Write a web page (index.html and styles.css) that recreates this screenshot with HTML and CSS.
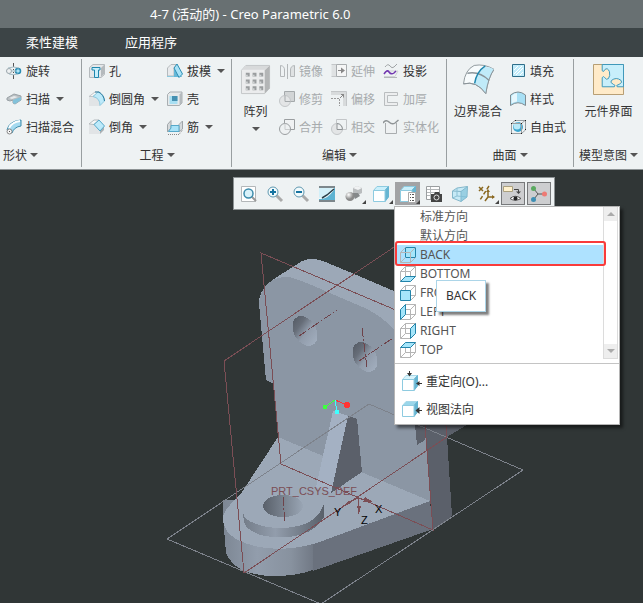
FILE: index.html
```html
<!DOCTYPE html>
<html lang="zh-CN">

<head>
    <meta charset="UTF-8">
    <title>4-7 (活动的) - Creo Parametric 6.0</title>
    <link rel="stylesheet" href="styles.css">
</head>

<body>
    <header class="titlebar">4-7 (活动的) - Creo Parametric 6.0</header>

    <nav class="tabs">
        <a href="#">柔性建模</a>
        <a href="#">应用程序</a>
    </nav>

    <div class="ribbon">
        <!-- 形状 -->
        <section class="group group-shape">
            <div class="commands">
                <div class="column">
                    <button class="cmd">
                        <svg class="icon" viewBox="0 0 16 16"><path d="M7.500 0v4M7.500 6v1M7.500 9v1M7.500 12v4" stroke="#555" fill="none"/><circle cx="3" cy="8" r="2.500" fill="#eef1f2" stroke="#9aa5aa"/><circle cx="12" cy="8" r="2.500" fill="#aee3f5" stroke="#2b8db3" stroke-width="1.500"/><path d="M2 5Q7.500 3 13 5M3 11Q7 12.500 12 11M5 8h5" fill="none" stroke="#a5bbc4"/></svg>
                        旋转
                    </button>
                    <button class="cmd">
                        <svg class="icon" viewBox="0 0 16 16"><path d="M1 7L8 3L15 5V9L9 13L7 12V9L4 10L1 9Z" fill="#b9bfc2" stroke="#9aa2a6"/><path d="M7 9L15 6V9L9 13L7 12Z" fill="#83c2da"/><path d="M3 7L8 5L12 6L6 8Z" fill="#e6eaec"/></svg>
                        扫描 <span class="caret"></span>
                    </button>
                    <button class="cmd">
                        <svg class="icon" viewBox="0 0 16 16"><path d="M1 11Q3 2 15 1V7Q8 8 6 14Z" fill="#a5daf0" stroke="#3b8bab"/><path d="M3 9Q6 3 14 2" stroke="#fff" stroke-width="2" fill="none"/><circle cx="3.500" cy="12.500" r="2.500" fill="#f5f5f5" stroke="#888"/><path d="M3 12h1v1H3z" fill="#555"/></svg>
                        扫描混合
                    </button>
                </div>
            </div>
            <button class="group-name">形状<span class="caret"></span></button>
        </section>

        <!-- 工程 -->
        <section class="group group-engineering">
            <div class="commands">
                <div class="column">
                    <button class="cmd">
                        <svg class="icon" viewBox="0 0 16 16"><path d="M.500 4.500L4 1.500H15.500V11.500L12 14.500H.500Z" fill="#e4e7e9" stroke="#b5babd"/><path d="M12 5v9l3-3V2Z" fill="#b5babd"/><path d="M3 4.500H11V7H9.500V14.500H5.500V7H3Z" fill="#c9effb" stroke="#1f87ae"/></svg>
                        孔
                    </button>
                    <button class="cmd">
                        <svg class="icon" viewBox="0 0 16 16"><path d="M0 6h6Q11 7 11 15H0Z" fill="#e1e4e6"/><path d="M0 5.500L6 1H10L4 5.500Z" fill="#f6f7f7" stroke="#c0c5c8"/><path d="M4 5.500L9 1Q15 4 15.500 10L11 14.500Q11 7 4 5.500Z" fill="#bdeafa" stroke="#8cc8de"/><path d="M6 1H10Q15 4 15.500 10" fill="none" stroke="#26799d"/></svg>
                        倒圆角 <span class="caret"></span>
                    </button>
                    <button class="cmd">
                        <svg class="icon" viewBox="0 0 16 16"><path d="M0 6h5l6 6v3H0Z" fill="#e1e4e6"/><path d="M0 5L5 1H10L5 5.500Z" fill="#f6f7f7" stroke="#b5babd"/><path d="M11 12v3l4-4V7" fill="#aab0b3"/><path d="M5 5.500L10 1L15.500 7L11 12Z" fill="#bdeafa" stroke="#55a8c9"/></svg>
                        倒角 <span class="caret"></span>
                    </button>
                </div>
                <div class="column">
                    <button class="cmd">
                        <svg class="icon" viewBox="0 0 16 16"><path d="M.500 5L4 1.500H10L7 5V13H.500Z" fill="#e8eaec" stroke="#b5babd"/><path d="M0 13.500h15" stroke="#8cc8de"/><path d="M7 5v9h5Z" fill="#66b8d8"/><path d="M7 5L10 1L15.500 11L12 14.500Z" fill="#a8e2f7" stroke="#2b8db3"/></svg>
                        拔模 <span class="caret"></span>
                    </button>
                    <button class="cmd">
                        <svg class="icon" viewBox="0 0 16 16"><path d="M.500 3.500L3 1H15V12L12.500 14.500H.500Z" fill="#e6e9ea" stroke="#a9afb2"/><path d="M12.500 3.500L15 1V12L12.500 14.500Z" fill="#b4babd"/><path d="M2.500 5h8v8h-8z" fill="#a8dff2"/><path d="M5 5h5.500v5H5z" fill="#4590b1"/></svg>
                        壳
                    </button>
                    <button class="cmd">
                        <svg class="icon" viewBox="0 0 16 16"><path d="M.500 5.500L4 1.500V9L.500 13ZM12 5.500L15.500 2V10L12 13Z" fill="#d5d9db" stroke="#a0a6a9"/><path d="M4 6.500H12V12.500H1.500L4 9Z" fill="#a8e2f7" stroke="#55a8c9"/><path d="M1 15.500H12L15.500 11" stroke="#888" stroke-dasharray="1 1" fill="none"/></svg>
                        筋 <span class="caret"></span>
                    </button>
                </div>
            </div>
            <button class="group-name">工程<span class="caret"></span></button>
        </section>

        <!-- 编辑 -->
        <section class="group group-edit">
            <div class="commands">
                <button class="cmd-large">
                    <svg class="icon-large" viewBox="0 0 32 32"><path d="M1.500 6.500L6 1.500H30.500V25L25.500 30.500H1.500Z" fill="#ebeced" stroke="#c3c6c8"/><path d="M25.500 6.500L30.500 1.500V25L25.500 30.500Z" fill="#b3b5b6"/><path d="M2 6L6 2H30L25.500 6Z" fill="#d8dadb"/><g fill="#9a9d9f"><path d="M6 9h4v4H6zM13 9h4v4h-4zM20 9h4v4h-4zM6 16h4v4H6zM13 16h4v4h-4zM20 16h4v4h-4zM6 23h4v4H6zM13 23h4v4h-4zM20 23h4v4h-4z"/></g><path d="M6 11h2v2H6zM13 11h2v2h-2zM20 11h2v2h-2zM6 18h2v2H6zM13 18h2v2h-2zM20 18h2v2h-2zM6 25h2v2H6zM13 25h2v2h-2zM20 25h2v2h-2z" fill="#d0d3d4"/></svg>
                    阵列
                    <span class="caret"></span>
                </button>
                <div class="column">
                    <button class="cmd" disabled>
                        <svg class="icon" viewBox="0 0 16 16" fill="none" stroke="#b3b7b9"><path d="M1.500 2.500Q6 3 5.500 8V13.500H1.500Z"/><path d="M8.500 1v15"/><path d="M15.500 2.500Q11 3 11.500 8V13.500H15.500Z" fill="#dfe2e3"/></svg>
                        镜像
                    </button>
                    <button class="cmd" disabled>
                        <svg class="icon" viewBox="0 0 16 16" stroke="#a4a9ab"><path d="M5.500 .500H15.500V10.500H5.500Z" fill="#d2d5d6"/><circle cx="6" cy="10" r="5.500" fill="#e3e5e6" stroke="#c3c6c8"/><path d="M6 4.500V10.500H11.500" fill="none"/></svg>
                        修剪
                    </button>
                    <button class="cmd" disabled>
                        <svg class="icon" viewBox="0 0 16 16" stroke="#9a9ea0"><path d="M5.500 .500H15.500V10.500H5.500Z" fill="#f0f2f3"/><circle cx="6" cy="10" r="5.500" fill="#eef1f2"/><path d="M6 4.500V10.500H11" fill="none" stroke="#c9cccd"/></svg>
                        合并
                    </button>
                </div>
                <div class="column">
                    <button class="cmd" disabled>
                        <svg class="icon" viewBox="0 0 16 16"><path d="M.500 1.500H5.500V13.500H.500" fill="#dfe2e3" stroke="#c3c6c8"/><path d="M5.500 1.500H15.500V13.500H5.500Z" fill="#f5f6f6" stroke="#a9adaf"/><path d="M7 7.500h4" stroke="#888"/><path d="M10 4.500v6l4-3Z" fill="#888"/></svg>
                        延伸
                    </button>
                    <button class="cmd" disabled>
                        <svg class="icon" viewBox="0 0 16 16"><path d="M0 .500H15.500V15H12V4H0Z" fill="#d8dbdc"/><path d="M0 .500H15.500V15" fill="none" stroke="#c3c6c8"/><path d="M0 7.500H8.500V15" fill="none" stroke="#999" stroke-dasharray="2 1"/><path d="M9 7L13 3M10 3.500h2.500v3" fill="none" stroke="#888"/></svg>
                        偏移
                    </button>
                    <button class="cmd" disabled>
                        <svg class="icon" viewBox="0 0 16 16" stroke="#c3c6c8"><path d="M5.500 .500H15.500V10.500H5.500Z" fill="none"/><circle cx="6" cy="10" r="5.500" fill="#e3e5e6"/><path d="M6 4.500Q11 5 11.500 10.500H6Z" fill="#eef1f2" stroke="#8f9496"/></svg>
                        相交
                    </button>
                </div>
                <div class="column">
                    <button class="cmd">
                        <svg class="icon" viewBox="0 0 16 16" fill="none"><path d="M2 4Q5 0 7 3T11 4L14 1" stroke="#a0a4a6"/><path d="M1 11L4 8H15L12 13.500H1" stroke="#d0d3d4"/><path d="M1 11Q4 6 6 9T11 10L13 8" stroke="#7136b0" stroke-width="1.500"/><path d="M1 14.500H14" stroke="#b3b7b9"/></svg>
                        投影
                    </button>
                    <button class="cmd" disabled>
                        <svg class="icon" viewBox="0 0 16 16"><path d="M14.500 1.500H1.500V14.500H14.500V11.500H4.500V4.500H14.500Z" fill="#eceeef" stroke="#b9bdbf"/></svg>
                        加厚
                    </button>
                    <button class="cmd" disabled>
                        <svg class="icon" viewBox="0 0 16 16"><path d="M2.500 4V14.500H13.500V4" fill="#eef1f2" stroke="#a9adaf"/><path d="M0 4Q3 0 6 3T12 4L15.500 1" fill="none" stroke="#8f9496" stroke-width="1.500"/></svg>
                        实体化
                    </button>
                </div>
            </div>
            <button class="group-name">编辑<span class="caret"></span></button>
        </section>

        <!-- 曲面 -->
        <section class="group group-surface">
            <div class="commands">
                <button class="cmd-large">
                    <svg class="icon-large" viewBox="0 0 32 32"><path d="M.500 20.500Q2 6 11.500 1.500Q22 -.500 32 5.500Q26 14 23.500 30.500Q14 17 .500 20.500Z" fill="#f7fbfc" stroke="#90999d"/><path d="M23 3Q28 3 32 5.500Q26 14 23.500 30.500Q18 23 12 20.500Q14 8 23 3Z" fill="#c0ebf9"/><path d="M32 5.500Q26 14 23.500 30.500Q14 17 .500 20.500" fill="none" stroke="#8a9499"/><path d="M4.500 9.500Q17 7 27 17" fill="none" stroke="#8a9499" stroke-width="1.500"/><path d="M23 2Q14 8 12 20" fill="none" stroke="#1f87ae" stroke-width="1.500"/></svg>
                    边界混合
                </button>
                <div class="column">
                    <button class="cmd">
                        <svg class="icon" viewBox="0 0 16 16"><path d="M2.500 1.500H14.500V13.500H2.500Z" fill="#c2ecfa" stroke="#2e6e8a"/><path d="M4 7L8 3M4 11L12 3M6 12L13 5M10 12L13 9" stroke="#fff"/></svg>
                        填充
                    </button>
                    <button class="cmd">
                        <svg class="icon" viewBox="0 0 16 16"><path d="M.500 4Q8 -2 15.500 4V14.500Q8 9 .500 14.500Z" fill="#a8e0f5" stroke="#7f8c92"/><path d="M1.500 5Q4 2 7 2V10.500Q4 11 1.500 12.500Z" fill="#e6f7fd"/></svg>
                        样式
                    </button>
                    <button class="cmd">
                        <svg class="icon" viewBox="0 0 16 16"><circle cx="8" cy="8" r="5" fill="#3aa5cf"/><circle cx="7" cy="7" r="3.500" fill="#b9e9f8"/><path d="M1.500 4.500H11.500V14.500H1.500ZM1.500 4.500L5 1.500H15.500V11L11.500 14.500M11.500 4.500L15 1.500" fill="none" stroke="#999fa2"/><path d="M1 4h1v1H1zM1 14h1v1H1zM11 14h1v1h-1zM15 1h1v1h-1zM5 1h1v1H5zM15 10h1v1h-1zM11 4h1v1h-1z" fill="#222"/></svg>
                        自由式
                    </button>
                </div>
            </div>
            <button class="group-name">曲面<span class="caret"></span></button>
        </section>

        <!-- 模型意图 -->
        <section class="group group-intent">
            <div class="commands">
                <button class="cmd-large">
                    <svg class="icon-large" viewBox="0 0 32 32"><path d="M.500 .500H31.500V31.500H.500Z" fill="#ffebc9" stroke="#b59b70"/><path d="M9.500 .500H31.500V23.500H25Q23 22 27 21Q31 19 29 17Q24 13 19 17Q17 19 21 21Q24 22 22 23.500H9.500V14Q11 12 12 14Q14 17 16 15Q18 12 17 8Q15 3 12 6Q11 9 9.500 7Z" fill="#c8effb" stroke="#3b97bb"/></svg>
                    元件界面
                </button>
            </div>
            <button class="group-name">模型意图<span class="caret"></span></button>
        </section>
    </div>

    <main class="viewport">
        <!-- 三维模型 -->
        <svg class="scene" width="643" height="433" viewBox="0 170 643 433" shape-rendering="crispEdges">
            <defs>
                <linearGradient id="side"><stop offset="0" stop-color="#7d8794"/><stop offset=".350" stop-color="#929dac"/><stop offset=".700" stop-color="#88929f"/><stop offset="1" stop-color="#6a717d"/></linearGradient>
                <linearGradient id="boss"><stop offset="0" stop-color="#737c88"/><stop offset=".400" stop-color="#929dac"/><stop offset="1" stop-color="#59606a"/></linearGradient>
                <linearGradient id="bore"><stop offset="0" stop-color="#59606a"/><stop offset="1" stop-color="#99a5b4"/></linearGradient>
                <linearGradient id="hole" x1=".200" y1="0" x2=".500" y2="1"><stop offset="0" stop-color="#555b65"/><stop offset=".300" stop-color="#666d78"/><stop offset=".600" stop-color="#919cab"/><stop offset="1" stop-color="#a0acbc"/></linearGradient>
            </defs>
            <!-- 竖板 -->
            <path d="M418 320L445 425H467L447 437L452 516L433 530L425 425Z" fill="#5b606a"/>
            <path d="M259 303Q259 288 277 277L302 261Q311 257 323 261L347 271L394 291L430 320L426 430L430 502L278 437L274 384L266 380Z" fill="#9ca8b7"/>
            <path d="M259 303Q262 277 288 277Q296 278 323 290L367 309Q383 317 394 330L415 350L425 425L431 502L278 437L274 384L266 380Z" fill="#8b96a4"/>
            <path d="M415 425H425V440L417 445Z" fill="#5b606a"/>
            <ellipse cx="305" cy="331" rx="11" ry="16" transform="rotate(-30 305 331)" fill="url(#hole)"/>
            <ellipse cx="365" cy="357" rx="11" ry="16" transform="rotate(-30 365 357)" fill="url(#hole)"/>
            <!-- 底板 -->
            <path d="M223 516L226 553Q231 565 244 571Q270 580 303 573L320 568V500H223Z" fill="url(#side)"/>
            <path d="M313 530L430 501L433 529L313 571Z" fill="#6a717d"/>
            <path d="M278 437L430 501L317 543Q285 552 260 547Q222 540 223 517Q223 511 242 492Z" fill="#9ca8b7"/>
            <path d="M243 513Q244 522 267 527Q291 530 307 523Q321 516 324 503V517Q317 529 303 534Q284 540 260 535Q245 529 244 522Z" fill="url(#boss)"/>
            <ellipse cx="283" cy="506" rx="20" ry="11" fill="url(#bore)"/>
            <!-- 筋板 -->
            <path d="M333 411L348 416L331 493L316 487Z" fill="#a4b1c3"/>
            <path d="M348 416L357 419L362 472L331 493Z" fill="#5b606a"/>
            <!-- 基准平面 -->
            <g fill="none">
                <path d="M167 539L369 404L523 470L321 604Z" stroke="#7d828b"/>
                <path d="M261 253L417 319L433 530L281 464Z" stroke="#7b4e55"/>
                <path d="M224 361L427 225L447 437L244 573Z" stroke="#7b4e55"/>
                <path d="M299 336L337 310M359 361L393 338M362 328L367 368M283 497L285 523" stroke="#6e434a" stroke-dasharray="9 2 2 2"/>
                <path d="M358 498L343 506M358 498L359 514M358 498L372 502" stroke="#7b4e55"/>
            </g>
            <path d="M342 507L349 500L351 503ZM357 506H361L359 514ZM365 497L363 502L373 502Z" fill="#7b4e55"/>
            <g class="scene-text">
                <text x="271" y="495" fill="#7b4e55">PRT_CSYS_DEF</text>
                <text x="334" y="516">Y</text>
                <text x="361" y="524">Z</text>
                <text x="375" y="513">X</text>
            </g>
            <!-- 旋转中心 -->
            <g fill="none">
                <path d="M335 400L325 407" stroke="#3eff3e"/><path d="M335 400L347 405" stroke="#ff3232"/><path d="M335 400L337 412" stroke="#3effff"/>
            </g>
            <circle cx="325" cy="407" r="2.500" fill="#3eff3e"/><circle cx="347" cy="405" r="3" fill="#ff3232"/><circle cx="337" cy="412" r="2.500" fill="#3effff"/>
        </svg>

        <div class="toolbar">
            <button aria-label="重新调整"><svg viewBox="0 0 16 16"><path d="M.500 .500H14.500V15.500H.500Z" fill="#fff" stroke="#b3b7b9"/><path d="M10 10L15 15" stroke="#999" stroke-width="2"/><circle cx="7.500" cy="7.500" r="4.500" fill="#d9f2fa" stroke="#3b8bab" stroke-width="1.500"/></svg></button>
            <button aria-label="放大"><svg viewBox="0 0 16 16"><path d="M9 9L15 15" stroke="#aaa" stroke-width="3"/><circle cx="6" cy="6" r="5" fill="#f2fafc" stroke="#5f98b0"/><path d="M3 6h6M6 3v6" stroke="#1673a0" stroke-width="2"/></svg></button>
            <button aria-label="缩小"><svg viewBox="0 0 16 16"><path d="M9 9L15 15" stroke="#aaa" stroke-width="3"/><circle cx="6" cy="6" r="5" fill="#f2fafc" stroke="#5f98b0"/><path d="M3 6h6" stroke="#1673a0" stroke-width="2"/></svg></button>
            <button aria-label="重画"><svg viewBox="0 0 16 16"><path d="M0 0H16V16H0Z" fill="#eef9fc"/><path d="M0 2V13Q8 14 15 4V2H16V15H0Z" fill="#5fb3d2"/><path d="M0 2H14L9 8L3 11L0 12Z" fill="#d3f0f9"/><path d="M0 1H16M0 15H16" stroke="#7d878c" stroke-width="2"/><path d="M3 12L8 9L15 3" fill="none" stroke="#273d47" stroke-width="1.500"/></svg></button>
            <button class="drop" aria-label="渲染选项"><svg viewBox="0 0 16 16"><defs><radialGradient id="ball" cx=".350" cy=".300"><stop offset="0" stop-color="#fff"/><stop offset="1" stop-color="#8a8a8a"/></radialGradient></defs><path d="M7 2L11 0L16 2V7L12 9L7 7Z" fill="#b9bcbe"/><path d="M7 2L11 0L16 2L12 4Z" fill="#f0f2f3"/><path d="M6 7h6l2 3-5 3z" fill="#85888a"/><circle cx="4" cy="10.500" r="4.500" fill="url(#ball)"/></svg></button>
            <button class="drop" aria-label="显示样式"><svg viewBox="0 0 16 16"><path d="M.500 4.500L4 .500H15.500L12 4.500Z" fill="#c9effb" stroke="#8ecbe0"/><path d="M12 4.500L15.500 .500V11L12 15.500Z" fill="#66b5d2" stroke="#66b5d2"/><path d="M.500 4.500H12V15.500H.500Z" fill="#fff" stroke="#8ecbe0"/></svg></button>
            <button class="drop pressed" aria-label="已保存方向"><svg viewBox="0 0 16 16"><path d="M.500 4.500L4 .500H15.500L12 4.500Z" fill="#c9effb" stroke="#8ecbe0"/><path d="M12 4.500L15.500 .500V11L12 15.500Z" fill="#66b5d2" stroke="#66b5d2"/><path d="M.500 4.500H12V15.500H.500Z" fill="#fff" stroke="#8ecbe0"/><path d="M8.500 6.500H15.500V16.500H8.500Z" fill="#fff" stroke="#aaa"/><path d="M10 8.500h1M12 8.500h2M10 11.500h1M12 11.500h2M10 14.500h1M12 14.500h2" stroke="#555"/></svg></button>
            <button aria-label="视图管理器"><svg viewBox="0 0 16 16"><path d="M.500 .500H13.500V13.500H.500Z" fill="#fff" stroke="#9a9ea0"/><path d="M1 3.500H13M1 6.500H13M1 9.500H13M4.500 1V13" stroke="#b3b7b9"/><path d="M5 8H8L9 6H13L14 8H16V16H5Z" fill="#444"/><circle cx="10.500" cy="11.500" r="2.500" fill="#444" stroke="#ddd"/></svg></button>
            <button aria-label="透视图"><svg viewBox="0 0 16 16"><path d="M.500 5L5 2L15.500 .500L15 11L9 15.500L.500 12Z" fill="#c6eaf6" stroke="#84b7ca"/><path d="M.500 5L9 5.500L15.500 .500M9 5.500V15.500" fill="none" stroke="#84b7ca"/><path d="M5 2V10L.500 12M5 10L15 11" fill="none" stroke="#8cc1d5"/><path d="M9 5.500L15 1V11L9 15.500Z" fill="#7cbdd5" opacity=".600"/></svg></button>
            <button class="drop" aria-label="基准显示过滤器"><svg viewBox="0 0 16 16"><g fill="none" stroke="#8a6820" stroke-width="1.500"><path d="M0 1L4 5M4 1L0 5"/><path d="M10 0L1 14" stroke-dasharray="4 2"/><path d="M9 5V11H15M9 11L6 15"/></g><path d="M7 6L9 3L11 6ZM13 9L16 11L13 13Z" fill="#8a6820"/></svg></button>
            <button class="toggled" aria-label="注释显示"><svg viewBox="0 0 16 16"><path d="M-1.500 .500H7.500V5.500H-1.500Z" fill="#fff2cf" stroke="#aaa07f"/><path d="M9 3.500H13.500V6" fill="none" stroke="#444"/><path d="M11 5.500H16L13.500 8Z" fill="#444"/><path d="M5 12.500Q10 8 16 12.500Q10 16 5 12.500Z" fill="#fff" stroke="#555"/><circle cx="10.500" cy="12.500" r="2" fill="#222"/></svg></button>
            <button class="toggled" aria-label="旋转中心"><svg viewBox="0 0 16 16"><path d="M7 8L3 3M7 8L3 13M7 8H13" stroke="#555"/><circle cx="2.500" cy="2.500" r="2.500" fill="#5aa960"/><circle cx="2.500" cy="13.500" r="2.500" fill="#3f8fb4"/><circle cx="13.500" cy="8" r="2.500" fill="#ee7b75"/></svg></button>
        </div>

        <div class="menu">
            <div class="views">
                <ul class="view-list">
                    <li><button>标准方向</button></li>
                    <li><button>默认方向</button></li>
                    <li class="selected"><button><svg class="icon" viewBox="0 0 16 16"><path class="face" d="M5.500 .500H15.500V10.500H5.500Z"/><path class="wire" d="M.500 5.500H10.500V15.500H.500ZM.500 5.500L5.500 .500M10.500 5.500L15.500 .500M.500 15.500L5.500 10.500M10.500 15.500L15.500 10.500"/></svg>BACK</button></li>
                    <li><button><svg class="icon" viewBox="0 0 16 16"><path class="wire" d="M.500 5.500H10.500V15.500H.500ZM5.500 .500H15.500V10.500H5.500ZM.500 5.500L5.500 .500M10.500 5.500L15.500 .500"/><path class="face" d="M.500 15.500L5.500 10.500H15.500L10.500 15.500Z"/></svg>BOTTOM</button></li>
                    <li><button><svg class="icon" viewBox="0 0 16 16"><path class="wire" d="M5.500 .500H15.500V10.500H5.500ZM.500 5.500L5.500 .500M10.500 5.500L15.500 .500M10.500 15.500L15.500 10.500"/><path class="face" d="M.500 5.500H10.500V15.500H.500Z"/></svg>FRONT</button></li>
                    <li><button><svg class="icon" viewBox="0 0 16 16"><path class="wire" d="M.500 5.500H10.500V15.500H.500ZM5.500 .500H15.500V10.500H5.500ZM10.500 5.500L15.500 .500M10.500 15.500L15.500 10.500"/><path class="face" d="M.500 5.500L5.500 .500V10.500L.500 15.500Z"/></svg>LEFT</button></li>
                    <li><button><svg class="icon" viewBox="0 0 16 16"><path class="wire" d="M.500 5.500H10.500V15.500H.500ZM5.500 .500H15.500V10.500H5.500ZM.500 5.500L5.500 .500M.500 15.500L5.500 10.500"/><path class="face" d="M10.500 5.500L15.500 .500V10.500L10.500 15.500Z"/></svg>RIGHT</button></li>
                    <li><button><svg class="icon" viewBox="0 0 16 16"><path class="wire" d="M.500 5.500H10.500V15.500H.500ZM5.500 .500H15.500V10.500H5.500ZM.500 15.500L5.500 10.500M10.500 15.500L15.500 10.500"/><path class="face" d="M.500 5.500L5.500 .500H15.500L10.500 5.500Z"/></svg>TOP</button></li>
                </ul>
                <div class="scrollbar">
                    <button aria-label="向上滚动"><span class="caret up"></span></button>
                    <button aria-label="向下滚动"><span class="caret"></span></button>
                </div>
            </div>
            <div class="actions">
                <button><svg class="icon-action" viewBox="0 0 20 20"><path d="M.500 8.500L4 4.500H15.500L12 8.500Z" fill="#d9f4fc" stroke="#a8d8e8"/><path d="M12 8.500L15.500 4.500V15L12 19.500Z" fill="#66b5d2" stroke="#66b5d2"/><path d="M.500 8.500H12V19.500H.500Z" fill="#fff" stroke="#8ecbe0"/><path d="M7.500 0V4M16 12.500H20" stroke="#333"/><path d="M5 2H10L7.500 5.500ZM17.500 10V15L14 12.500Z" fill="#333"/></svg>重定向(O)...</button>
                <button><svg class="icon-action" viewBox="0 0 20 20"><path d="M.500 6.500L4 2.500H15.500L12 6.500Z" fill="#9ad6ea" stroke="#a8d8e8"/><path d="M12 6.500L15.500 2.500V13L12 17.500Z" fill="#66b5d2" stroke="#66b5d2"/><path d="M.500 6.500H12V17.500H.500Z" fill="#fff" stroke="#8ecbe0"/><path d="M16 11.500H20" stroke="#333"/><path d="M17.500 8V15L13.500 11.500Z" fill="#333"/></svg>视图法向</button>
            </div>
            <div class="tooltip" role="tooltip">BACK</div>
        </div>
    </main>
</body>

</html>
```
FILE: styles.css
```css
* {
    box-sizing: border-box;
}

body {
    margin: 0;
    min-height: 100vh;
    display: flex;
    flex-direction: column;
    font-family: "Noto Sans", "Noto Sans CJK SC", sans-serif;
    font-size: 12px;
    color: #333;
    background-color: #303636;
}

button {
    padding: 0;
    border: 0;
    background: none;
    font: inherit;
    color: inherit;
    white-space: nowrap;
    cursor: pointer;
}

svg {
    display: block;
    flex: none;
}

.titlebar {
    height: 28px;
    padding-left: 150px;
    font-size: 13px;
    line-height: 28px;
    color: #fff;
    background-color: #687072;
}

.tabs {
    display: flex;
    gap: 47px;
    height: 29px;
    padding-left: 26px;
    background-color: #3c4446;
}

.tabs a {
    font-size: 13px;
    line-height: 29px;
    color: #fff;
    text-decoration: none;
}

/* Ribbon */
.ribbon {
    display: flex;
    background-color: #eef2f3;
    border-bottom: 1px solid #8d9395;
}

.group {
    position: relative;
    display: flex;
    flex-direction: column;
}

.group:not(:last-child)::after {
    content: "";
    position: absolute;
    top: 2px;
    right: 0;
    bottom: 2px;
    width: 1px;
    background-color: #999fa1;
}

.group-shape {
    padding: 0 8px 0 6px;
}

.group-engineering {
    padding: 0 7px;
}

.group-edit {
    padding: 0 8px;
}

.group-surface {
    padding: 0 8px 0 7px;
}

.group-intent {
    flex: 1;
    align-items: center;
}

.commands {
    display: flex;
    gap: 8px;
}

.column {
    display: flex;
    flex-direction: column;
}

.cmd {
    display: flex;
    align-items: center;
    gap: 4px;
    height: 28px;
}

.cmd:disabled {
    color: #a7abad;
}

.cmd .caret {
    margin-left: 2px;
}

.cmd-large {
    display: flex;
    flex-direction: column;
    align-items: center;
    gap: 8px;
    height: 84px;
    padding-top: 7px;
    line-height: 18px;
}

.cmd-large .caret {
    margin-top: -2px;
}

.group-name {
    display: flex;
    align-items: center;
    justify-content: center;
    gap: 3px;
    height: 28px;
}

.group-shape .group-name {
    justify-content: flex-start;
    margin-left: -3px;
}

.icon {
    width: 16px;
    height: 16px;
}

.icon-large {
    width: 31px;
    height: 31px;
}

.caret {
    width: 0;
    height: 0;
    border: 4px solid transparent;
    border-top-color: #555;
    border-bottom: 0;
}

.caret.up {
    border-top: 0;
    border-bottom: 4px solid #aaa;
}

/* Model view */
.viewport {
    position: relative;
    flex: 1;
    overflow: hidden;
}

.scene-text {
    font-family: "Liberation Sans", sans-serif;
    font-size: 11px;
}

.toolbar {
    position: absolute;
    top: 7px;
    left: 233px;
    display: flex;
    gap: 2px;
    padding: 4px 3px;
    border: 1px solid #8d9395;
    background-color: #eef2f3;
}

.toolbar button {
    position: relative;
    display: flex;
    align-items: center;
    justify-content: center;
    width: 24px;
    height: 23px;
}

.toolbar svg {
    width: 16px;
    height: 16px;
    overflow: visible;
}

.toolbar .drop {
    width: 25px;
}

.toolbar .drop::after {
    content: "";
    position: absolute;
    right: 0;
    bottom: 1px;
    border: 2px solid #444;
    border-top-color: transparent;
    border-left-color: transparent;
}

.toolbar .pressed {
    background-color: #a2a3a5;
}

.toolbar .toggled {
    border: 1px solid #77797b;
    background-color: #cdced0;
}

/* Saved orientations menu */
.menu {
    position: absolute;
    top: 36px;
    left: 394px;
    width: 226px;
    padding-bottom: 1px;
    border: 1px solid #b5b5b5;
    background-color: #fff;
    box-shadow: 3px 3px 3px rgba(0, 0, 0, 0.5);
}

.views {
    display: flex;
    padding-right: 1px;
    margin-bottom: 4px;
}

.view-list {
    flex: 1;
    margin: 0;
    padding: 0;
    list-style-type: none;
    color: #555;
}

.view-list button {
    display: flex;
    align-items: center;
    gap: 4px;
    width: 100%;
    height: 19px;
    padding-left: 5px;
    line-height: 19px;
}

.view-list button:not(:has(svg)) {
    padding-left: 25px;
}

.view-list .selected {
    position: relative;
    background-color: #aee2ff;
}

.view-list .selected::after {
    content: "";
    position: absolute;
    inset: -4px -3px -2px 0;
    border: 2px solid #f93b3b;
    border-radius: 3px;
}

.face {
    fill: #a5e5fa;
    stroke: #2384aa;
}

.wire {
    fill: none;
    stroke: #b5b5b5;
}

.scrollbar {
    display: flex;
    flex-direction: column;
    justify-content: space-between;
    width: 15px;
    border: 1px solid #dcdcdc;
    border-top: 0;
}

.scrollbar button {
    display: flex;
    align-items: center;
    justify-content: center;
    height: 14px;
    background-color: #eee;
}

.scrollbar .caret:not(.up) {
    border-top-color: #aaa;
}

.actions {
    padding: 3px 0 0 7px;
    border-top: 1px solid #c4c4c4;
}

.actions button {
    display: flex;
    align-items: center;
    gap: 4px;
    height: 28px;
}

.icon-action {
    width: 20px;
    height: 20px;
}

.tooltip {
    position: absolute;
    top: 73px;
    left: 41px;
    padding: 0 9px;
    border: 1px solid #acd5e8;
    line-height: 30px;
    background-color: #fff;
    box-shadow: 3px 3px 2px rgba(0, 0, 0, 0.5);
}
```
